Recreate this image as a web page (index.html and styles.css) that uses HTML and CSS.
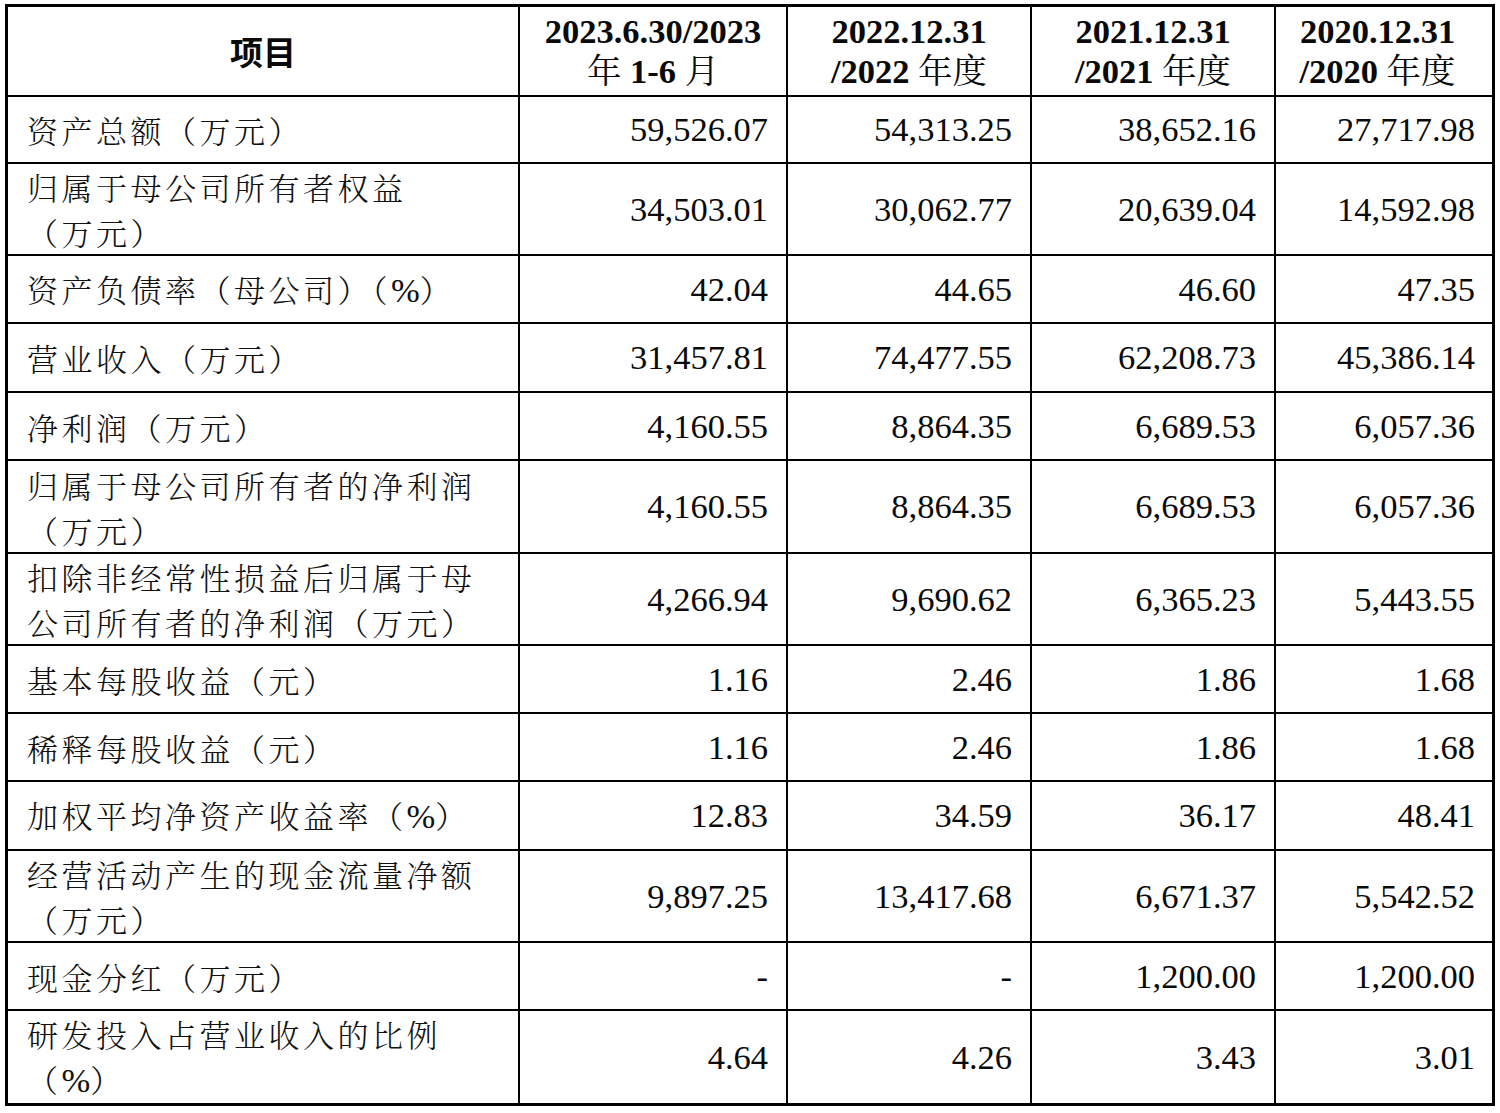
FILE: index.html
```html
<!DOCTYPE html>
<html lang="zh-CN">
<head>
<meta charset="utf-8">
<title>主要财务数据</title>
<link rel="stylesheet" href="styles.css">
</head>
<body>
<table class="fin">
  <colgroup>
    <col class="c1"><col class="c2"><col class="c3"><col class="c4"><col class="c5">
  </colgroup>
  <thead>
    <tr class="h-head">
      <th class="title">项目</th>
      <th>2023.6.30/2023<br><span class="cn">年</span> 1-6 <span class="cn">月</span></th>
      <th>2022.12.31<br>/2022 <span class="cn">年度</span></th>
      <th>2021.12.31<br>/2021 <span class="cn">年度</span></th>
      <th>2020.12.31<br>/2020 <span class="cn">年度</span></th>
    </tr>
  </thead>
  <tbody>
    <tr class="h67"><td class="label">资产总额（万元）</td><td>59,526.07</td><td>54,313.25</td><td>38,652.16</td><td>27,717.98</td></tr>
    <tr class="h92"><td class="label">归属于母公司所有者权益<br>（万元）</td><td>34,503.01</td><td>30,062.77</td><td>20,639.04</td><td>14,592.98</td></tr>
    <tr class="h68"><td class="label">资产负债率（母公司）（<span class="lat">%</span>）</td><td>42.04</td><td>44.65</td><td>46.60</td><td>47.35</td></tr>
    <tr class="h69"><td class="label">营业收入（万元）</td><td>31,457.81</td><td>74,477.55</td><td>62,208.73</td><td>45,386.14</td></tr>
    <tr class="h68"><td class="label">净利润（万元）</td><td>4,160.55</td><td>8,864.35</td><td>6,689.53</td><td>6,057.36</td></tr>
    <tr class="h93"><td class="label">归属于母公司所有者的净利润<br>（万元）</td><td>4,160.55</td><td>8,864.35</td><td>6,689.53</td><td>6,057.36</td></tr>
    <tr class="h92"><td class="label">扣除非经常性损益后归属于母<br>公司所有者的净利润（万元）</td><td>4,266.94</td><td>9,690.62</td><td>6,365.23</td><td>5,443.55</td></tr>
    <tr class="h68"><td class="label">基本每股收益（元）</td><td>1.16</td><td>2.46</td><td>1.86</td><td>1.68</td></tr>
    <tr class="h68"><td class="label">稀释每股收益（元）</td><td>1.16</td><td>2.46</td><td>1.86</td><td>1.68</td></tr>
    <tr class="h69"><td class="label">加权平均净资产收益率（<span class="lat">%</span>）</td><td>12.83</td><td>34.59</td><td>36.17</td><td>48.41</td></tr>
    <tr class="h92"><td class="label">经营活动产生的现金流量净额<br>（万元）</td><td>9,897.25</td><td>13,417.68</td><td>6,671.37</td><td>5,542.52</td></tr>
    <tr class="h68"><td class="label">现金分红（万元）</td><td>-</td><td>-</td><td>1,200.00</td><td>1,200.00</td></tr>
    <tr class="h91"><td class="label">研发投入占营业收入的比例<br>（<span class="lat">%</span>）</td><td>4.64</td><td>4.26</td><td>3.43</td><td>3.01</td></tr>
  </tbody>
</table>
</body>
</html>
```
FILE: styles.css
```css
html, body {
  margin: 0;
  padding: 0;
  background: #ffffff;
}

body {
  padding: 4px 0 0 5px;
  font-family: "Liberation Serif", "Noto Serif CJK SC", "Noto Sans CJK SC", serif;
  color: #0a0a0a;
}

.fin {
  width: 1490px;
  table-layout: fixed;
  border-collapse: separate;
  border-spacing: 0;
  border: 3px solid #000;
  font-size: 34.5px;
}

.c1 { width: 512px; }
.c2 { width: 268px; }
.c3 { width: 244px; }
.c4 { width: 244px; }
.c5 { width: 216px; }

.fin th,
.fin td {
  border-right: 2px solid #000;
  border-bottom: 2px solid #000;
  padding: 0 18px 0 19px;
  vertical-align: middle;
  white-space: nowrap;
}

.fin th:last-child,
.fin td:last-child {
  border-right: 0;
  padding-right: 17px;
}

.fin tbody tr:last-child td {
  border-bottom: 0;
}

.fin th {
  text-align: center;
  font-weight: bold;
  line-height: 40px;
  padding: 0 4px;
}

.fin th .cn {
  font-weight: normal;
}

.fin th.title {
  font-family: "Noto Sans CJK SC", sans-serif;
  font-weight: bold;
  font-size: 33px;
}

.fin td {
  text-align: right;
  line-height: 45px;
}

.fin td.label {
  text-align: left;
  font-family: "Noto Serif CJK SC", "Noto Sans CJK SC", sans-serif;
  font-size: 31px;
  letter-spacing: 3.5px;
  font-weight: 300;
  color: #111;
}

.fin td.label .lat {
  font-family: "Liberation Serif", serif;
  font-size: 34.5px;
  letter-spacing: 0;
  font-weight: normal;
}

.h-head { height: 90px; }
.h67 { height: 67px; }
.h68 { height: 68px; }
.h69 { height: 69px; }
.h91 { height: 91px; }
.h92 { height: 92px; }
.h93 { height: 93px; }
```
